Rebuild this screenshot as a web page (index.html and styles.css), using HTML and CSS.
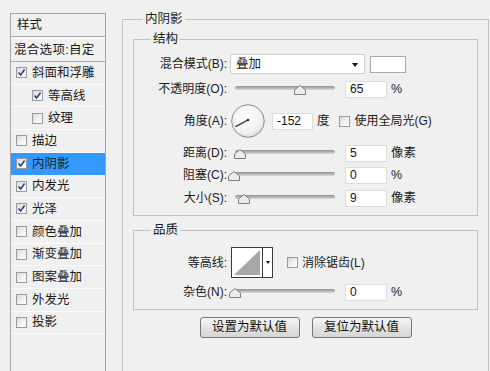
FILE: index.html
```html
<!DOCTYPE html>
<html lang="zh-CN">
<head>
<meta charset="utf-8">
<title>图层样式 - 内阴影</title>
<link rel="stylesheet" href="styles.css">
</head>
<body>
<div class="dialog">
  <nav class="style-list">
    <div class="list-head">样式</div>
    <div class="list-blend">混合选项:自定</div>
    <div class="item"><span class="cb"><svg viewBox="0 0 9 9"><path d="M1.5 4.5 L3.6 7 L7.6 1.6"/></svg></span>斜面和浮雕</div>
    <div class="item sub"><span class="cb"><svg viewBox="0 0 9 9"><path d="M1.5 4.5 L3.6 7 L7.6 1.6"/></svg></span>等高线</div>
    <div class="item sub"><span class="cb"></span>纹理</div>
    <div class="item"><span class="cb"></span>描边</div>
    <div class="item active"><span class="cb"><svg viewBox="0 0 9 9"><path d="M1.5 4.5 L3.6 7 L7.6 1.6"/></svg></span>内阴影</div>
    <div class="item"><span class="cb"><svg viewBox="0 0 9 9"><path d="M1.5 4.5 L3.6 7 L7.6 1.6"/></svg></span>内发光</div>
    <div class="item"><span class="cb"><svg viewBox="0 0 9 9"><path d="M1.5 4.5 L3.6 7 L7.6 1.6"/></svg></span>光泽</div>
    <div class="item"><span class="cb"></span>颜色叠加</div>
    <div class="item"><span class="cb"></span>渐变叠加</div>
    <div class="item"><span class="cb"></span>图案叠加</div>
    <div class="item"><span class="cb"></span>外发光</div>
    <div class="item"><span class="cb"></span>投影</div>
  </nav>

  <main class="panel">
    <fieldset class="group outer">
      <legend class="lg-outer">内阴影</legend>

      <fieldset class="group struct">
        <legend class="lg-inner">结构</legend>

        <div class="row r-blend">
          <span class="lbl">混合模式(B):</span>
          <div class="select">叠加<span class="arrow"></span></div>
          <div class="swatch"></div>
        </div>

        <div class="row r-opacity">
          <span class="lbl">不透明度(O):</span>
          <div class="slider"><div class="track"></div><svg class="thumb" style="left:65%" viewBox="0 0 12 10"><path d="M6 0.5 L11.5 5 L11.5 9.5 L0.5 9.5 L0.5 5 Z"/></svg></div>
          <div class="field">65</div>
          <span class="unit">%</span>
        </div>

        <div class="row r-angle">
          <span class="lbl">角度(A):</span>
          <svg class="dial" viewBox="0 0 34 34">
            <defs>
              <radialGradient id="dg" cx="45%" cy="40%" r="65%">
                <stop offset="0" stop-color="#ffffff"/>
                <stop offset="0.7" stop-color="#f1f1f1"/>
                <stop offset="1" stop-color="#d6d6d6"/>
              </radialGradient>
            </defs>
            <circle cx="17" cy="17" r="16.3" fill="url(#dg)" stroke="#8d8d8d" stroke-width="1"/>
            <line x1="17" y1="16" x2="4.6" y2="22.6" stroke="#2a2a2a" stroke-width="1.2"/>
            <circle cx="17" cy="16" r="1.3" fill="#2a2a2a"/>
          </svg>
          <div class="field angle">-152</div>
          <span class="unit">度</span>
          <span class="cb cb-global"></span>
          <span class="cb-text">使用全局光(G)</span>
        </div>

        <div class="row r-distance">
          <span class="lbl">距离(D):</span>
          <div class="slider"><div class="track"></div><svg class="thumb" style="left:5%" viewBox="0 0 12 10"><path d="M6 0.5 L11.5 5 L11.5 9.5 L0.5 9.5 L0.5 5 Z"/></svg></div>
          <div class="field">5</div>
          <span class="unit">像素</span>
        </div>

        <div class="row r-choke">
          <span class="lbl">阻塞(C):</span>
          <div class="slider"><div class="track"></div><svg class="thumb" style="left:-1%" viewBox="0 0 12 10"><path d="M6 0.5 L11.5 5 L11.5 9.5 L0.5 9.5 L0.5 5 Z"/></svg></div>
          <div class="field">0</div>
          <span class="unit">%</span>
        </div>

        <div class="row r-size">
          <span class="lbl">大小(S):</span>
          <div class="slider"><div class="track"></div><svg class="thumb" style="left:9%" viewBox="0 0 12 10"><path d="M6 0.5 L11.5 5 L11.5 9.5 L0.5 9.5 L0.5 5 Z"/></svg></div>
          <div class="field">9</div>
          <span class="unit">像素</span>
        </div>
      </fieldset>

      <fieldset class="group quality">
        <legend class="lg-inner">品质</legend>

        <div class="row r-contour">
          <span class="lbl">等高线:</span>
          <div class="contour">
            <svg class="contour-preview" viewBox="0 0 31 29" preserveAspectRatio="none">
              <rect x="0" y="0" width="31" height="29" fill="#ffffff"/>
              <polygon points="2,27 29,2 29,27" fill="#a7a7a7"/>
            </svg>
            <span class="contour-drop"><span class="arrow"></span></span>
          </div>
          <span class="cb cb-aa"></span>
          <span class="cb-text aa-text">消除锯齿(L)</span>
        </div>

        <div class="row r-noise">
          <span class="lbl">杂色(N):</span>
          <div class="slider"><div class="track"></div><svg class="thumb" style="left:0%" viewBox="0 0 12 10"><path d="M6 0.5 L11.5 5 L11.5 9.5 L0.5 9.5 L0.5 5 Z"/></svg></div>
          <div class="field">0</div>
          <span class="unit">%</span>
        </div>
      </fieldset>

      <div class="buttons">
        <button class="btn" type="button">设置为默认值</button>
        <button class="btn" type="button">复位为默认值</button>
      </div>
    </fieldset>
  </main>
</div>
</body>
</html>
```

FILE: styles.css
```css
* {
  box-sizing: border-box;
}

html,
body {
  margin: 0;
  height: 100%;
}

body {
  background: #f0f0f0;
  color: #1b1b1b;
  font-family: "Liberation Sans", "Noto Sans CJK SC", sans-serif;
  font-size: 12px;
  line-height: 16px;
  overflow: hidden;
}

.dialog {
  display: flex;
  align-items: flex-start;
  height: 100%;
  padding-left: 10px;
}

/* ---------- left style list ---------- */
.style-list {
  flex: none;
  width: 96px;
  height: 358px;
  margin-top: 13px;
  border: 1px solid #a6a6a6;
  border-bottom: 0;
  background: #f0f0f0;
  font-size: 12.5px;
}

.list-head {
  height: 23px;
  padding-left: 6px;
  line-height: 22px;
  border-bottom: 1px solid #a9a9a9;
}

.list-blend {
  height: 25px;
  padding-left: 3px;
  line-height: 22px;
  letter-spacing: 0.3px;
  border-top: 2px solid #fbfbfb;
  border-bottom: 1px solid #a9a9a9;
}

.item {
  display: flex;
  align-items: center;
  height: 22.7px;
  padding-left: 5px;
  border-bottom: 1px solid #fbfbfb;
}

.item .cb {
  margin-right: 5px;
}

.item.sub {
  padding-left: 21px;
}

.item.active {
  background: #3399ff;
  border-bottom-color: #3399ff;
}

/* ---------- checkbox ---------- */
.cb {
  flex: none;
  display: inline-flex;
  align-items: center;
  justify-content: center;
  width: 11px;
  height: 11px;
  border: 1px solid #9a9a9a;
  background: linear-gradient(135deg, #d9d9d9 0%, #f4f4f4 60%, #ffffff 100%);
}

.cb svg {
  width: 9px;
  height: 9px;
  fill: none;
  stroke: #24408a;
  stroke-width: 1.6;
}

.cb-text {
  margin-left: 5px;
}

/* ---------- right panel ---------- */
.panel {
  flex: none;
  width: 367px;
  margin-left: 16px;
}

.group {
  margin: 0;
  min-width: 0;
  border: 1px solid #c2c2c2;
}

legend {
  padding: 0 2px;
  font-size: 12.5px;
  line-height: 16px;
}

.lg-outer {
  margin-left: 10px;
}

.lg-inner {
  margin-left: 17px;
}

.outer {
  height: 360px;
  margin-top: 11px;
  padding: 4px 10px 0;
  border-bottom: 0;
}

.struct {
  padding: 7px 0 8px;
}

.quality {
  margin-top: 6px;
  padding: 9px 0 8px;
}

.row {
  display: flex;
  align-items: center;
  height: 18px;
}

.lbl {
  flex: none;
  width: 93px;
  text-align: right;
}

.r-blend {
  height: 20px;
}

.r-opacity {
  margin-top: 6px;
}

.r-angle {
  height: 36px;
  margin-top: 5px;
}

.r-distance {
  margin-top: 5px;
}

.r-choke {
  margin-top: 4px;
}

.r-size {
  margin-top: 5px;
}

.r-contour {
  height: 31px;
}

.r-noise {
  margin-top: 5px;
}

/* select + swatch */
.select {
  position: relative;
  display: flex;
  align-items: center;
  width: 135px;
  height: 20px;
  margin-left: 3px;
  padding-left: 5px;
  background: #ffffff;
  border: 1px solid #cfcfcf;
  font-size: 12.5px;
}

.select .arrow {
  position: absolute;
  right: 6px;
  top: 8px;
}

.arrow {
  width: 0;
  height: 0;
  border-left: 3.5px solid transparent;
  border-right: 3.5px solid transparent;
  border-top: 4px solid #111111;
}

.swatch {
  width: 36px;
  height: 17px;
  margin-left: 5px;
  background: #ffffff;
  border: 1px solid #a8a8a8;
}

/* slider */
.slider {
  position: relative;
  flex: none;
  width: 100px;
  height: 18px;
  margin-left: 8px;
}

.track {
  margin-top: 6px;
  height: 4px;
  border-radius: 2px;
  background: linear-gradient(#8f8f8f, #bdbdbd 60%, #dadada);
}

.thumb {
  position: absolute;
  top: 5px;
  width: 12px;
  height: 10px;
  transform: translateX(-50%);
  fill: #ececec;
  stroke: #7e7e7e;
  stroke-width: 1;
}

/* number field */
.field {
  flex: none;
  width: 42px;
  height: 17px;
  margin-left: 10px;
  padding-left: 4px;
  background: #ffffff;
  border: 1px solid #dcdcdc;
  line-height: 15px;
  color: #111111;
}

.unit {
  margin-left: 4px;
  font-size: 12.5px;
}

/* angle */
.dial {
  flex: none;
  width: 34px;
  height: 34px;
  margin-left: 4px;
}

.field.angle {
  width: 41px;
  margin-left: 7px;
}

.cb-global {
  margin-left: 9px;
}

/* contour */
.contour {
  flex: none;
  display: flex;
  width: 42px;
  height: 31px;
  margin-left: 4px;
  border: 1px solid #3a3a3a;
  background: #ffffff;
}

.contour-preview {
  flex: 1;
  height: 29px;
}

.contour-drop {
  display: flex;
  align-items: center;
  justify-content: center;
  width: 10px;
  border-left: 1px solid #3a3a3a;
}

.contour-drop .arrow {
  border-left-width: 2.5px;
  border-right-width: 2.5px;
  border-top-width: 3px;
}

.cb-aa {
  margin-left: 14px;
}

.aa-text {
  margin-left: 4px;
}

/* buttons */
.buttons {
  display: flex;
  justify-content: center;
  gap: 12px;
  margin-top: 7px;
}

.btn {
  width: 100px;
  height: 21px;
  padding: 0;
  border: 1px solid #767676;
  border-radius: 3px;
  background: linear-gradient(#f7f7f7, #e4e4e4 50%, #d6d6d6);
  font-family: "Liberation Sans", "Noto Sans CJK SC", sans-serif;
  font-size: 12.5px;
  line-height: 19px;
  color: #111111;
}
```
